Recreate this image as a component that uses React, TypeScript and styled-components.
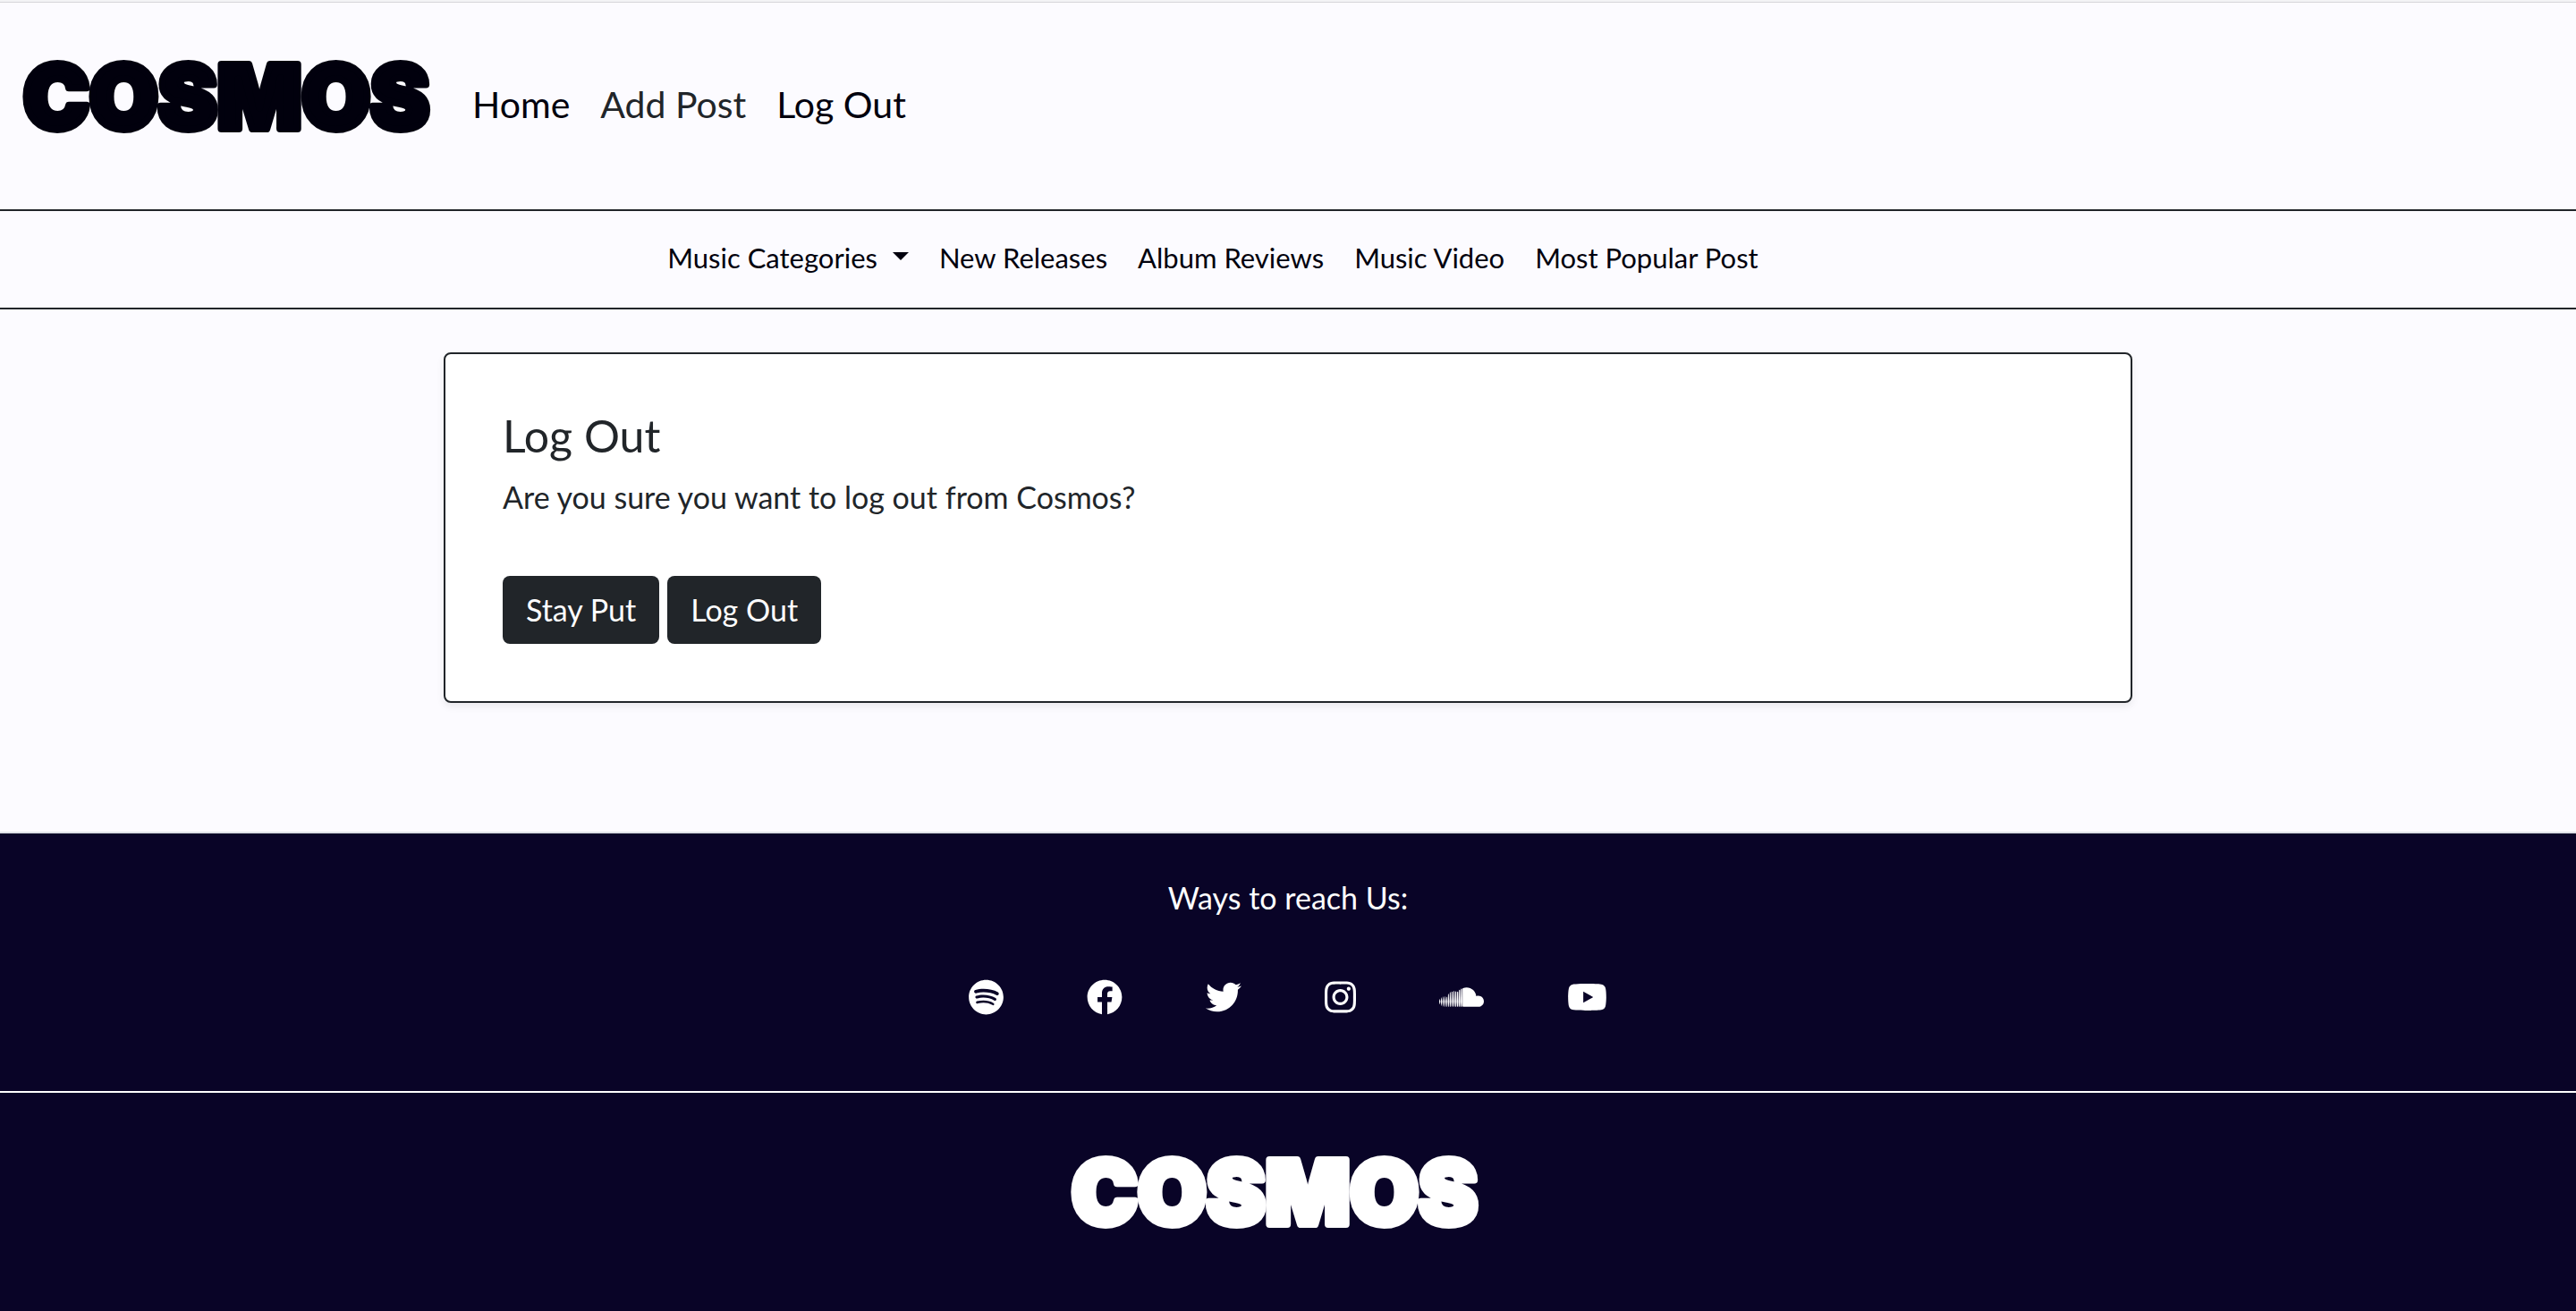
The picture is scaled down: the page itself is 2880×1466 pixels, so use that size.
import React from "react";
import styled, { createGlobalStyle } from "styled-components";
import {
  FaSpotify,
  FaFacebook,
  FaTwitter,
  FaInstagram,
  FaSoundcloud,
  FaYoutube,
} from "react-icons/fa";

const color = {
  page: "#fcfbff",
  ink: "#01000d",
  dark: "#212529",
  night: "#090427",
  white: "#ffffff",
};

const GlobalStyle = createGlobalStyle`
  *, *::before, *::after { box-sizing: border-box; }
  body {
    margin: 0;
    background: ${color.page};
    color: ${color.dark};
    font-family: Lato, "Liberation Sans", sans-serif;
    font-size: 34px;
    line-height: 48px;
  }
`;

const Page = styled.div`
  display: flex;
  flex-direction: column;
  min-height: 100vh;
  border-top: 2px solid #f3f3f5;
`;

const Header = styled.header`
  display: flex;
  align-items: center;
  gap: 16px;
  height: 234px;
  padding: 0 24px;
  border-top: 1px solid #d6d6da;
  border-bottom: 2px solid ${color.dark};
`;

const MainNav = styled.nav`
  padding-bottom: 4px;
`;

const Brand = styled.a<{ $light?: boolean }>`
  display: block;
  margin: 0 28px 20px 0;
  color: ${(p) => (p.$light ? color.white : color.ink)};
`;

const Wordmark = styled.svg`
  display: block;
  width: 460px;
  height: 84px;
  overflow: visible;
  fill: currentColor;
  stroke: currentColor;
  stroke-width: 8px;
  stroke-linejoin: round;
  font: 900 99px Inter, "Liberation Sans", sans-serif;
`;

const NavList = styled.ul<{ $sub?: boolean }>`
  display: flex;
  align-items: center;
  gap: 34px;
  margin: 0;
  padding: 0;
  list-style: none;
  font-size: ${(p) => (p.$sub ? 31 : 41)}px;
`;

const NavLink = styled.a<{ $muted?: boolean }>`
  color: ${(p) => (p.$muted ? color.dark : color.ink)};
  text-decoration: none;
`;

const Toggle = styled.button`
  display: flex;
  align-items: center;
  gap: 17px;
  padding: 0;
  border: 0;
  background: none;
  color: ${color.ink};
  font: inherit;
  line-height: 48px;
  cursor: pointer;

  &::after {
    content: "";
    margin-bottom: 4px;
    border-top: 9px solid currentColor;
    border-right: 9px solid transparent;
    border-left: 9px solid transparent;
  }
`;

const SubNav = styled.nav`
  display: flex;
  justify-content: center;
  padding: 28px 168px 32px 0;
  border-bottom: 2px solid ${color.dark};
`;

const Main = styled.main`
  width: 66.6667%;
  margin: 48px auto 144px;
  padding: 0 16px;
`;

const Card = styled.section`
  padding: 62px 64px 64px;
  border: 2px solid ${color.dark};
  border-radius: 8px;
  background: ${color.white};
  box-shadow: 0 4px 8px rgba(0, 0, 0, 0.08);
`;

const Title = styled.h1`
  margin: 0 0 16px;
  font-size: 50px;
  font-weight: 400;
  line-height: 58px;
`;

const Question = styled.p`
  margin: 0;
`;

const Actions = styled.form`
  display: flex;
  gap: 9px;
  margin-top: 64px;
`;

const Button = styled.button`
  padding: 14px 26px;
  border: 0;
  border-radius: 8px;
  background: ${color.dark};
  color: ${color.white};
  font: inherit;
  cursor: pointer;
`;

const Footer = styled.footer`
  display: flex;
  flex: 1;
  flex-direction: column;
  border-top: 2px solid #dee2e6;
  background: ${color.night};
  color: ${color.white};
`;

const Contact = styled.section`
  display: flex;
  flex-direction: column;
  align-items: center;
  gap: 67px;
  padding: 48px 0 85px;
  border-bottom: 2px solid ${color.white};
`;

const Reach = styled.p`
  margin: 0;
`;

const Socials = styled.ul`
  display: flex;
  gap: 93px;
  margin: 0;
  padding: 0;
  list-style: none;
`;

const SocialLink = styled.a<{ $width: number }>`
  display: block;
  color: ${color.white};

  svg {
    display: block;
    width: ${(p) => p.$width}px;
    height: 40px;
  }
`;

const FooterBrand = styled.div`
  display: flex;
  justify-content: center;
  padding-top: 70px;
`;

const links = ["New Releases", "Album Reviews", "Music Video", "Most Popular Post"];

const socials = [
  { name: "Spotify", Icon: FaSpotify, width: 39 },
  { name: "Facebook", Icon: FaFacebook, width: 40 },
  { name: "Twitter", Icon: FaTwitter, width: 40 },
  { name: "Instagram", Icon: FaInstagram, width: 35 },
  { name: "SoundCloud", Icon: FaSoundcloud, width: 50 },
  { name: "YouTube", Icon: FaYoutube, width: 45 },
];

function Logo({ light }: { light?: boolean }) {
  return (
    <Brand href="#" $light={light}>
      <Wordmark viewBox="0 0 460 84">
        <text x="2" y="77">COSMOS</text>
      </Wordmark>
    </Brand>
  );
}

export default function App() {
  return (
    <Page>
      <GlobalStyle />
      <Header>
        <Logo />
        <MainNav>
          <NavList>
            <li><NavLink href="#">Home</NavLink></li>
            <li><NavLink href="#" $muted>Add Post</NavLink></li>
            <li><NavLink href="#">Log Out</NavLink></li>
          </NavList>
        </MainNav>
      </Header>
      <SubNav>
        <NavList $sub>
          <li><Toggle type="button">Music Categories</Toggle></li>
          {links.map((label) => (
            <li key={label}><NavLink href="#">{label}</NavLink></li>
          ))}
        </NavList>
      </SubNav>
      <Main>
        <Card>
          <Title>Log Out</Title>
          <Question>Are you sure you want to log out from Cosmos?</Question>
          <Actions>
            <Button type="button">Stay Put</Button>
            <Button type="submit">Log Out</Button>
          </Actions>
        </Card>
      </Main>
      <Footer>
        <Contact>
          <Reach>Ways to reach Us:</Reach>
          <Socials>
            {socials.map(({ name, Icon, width }) => (
              <li key={name}>
                <SocialLink href="#" aria-label={name} $width={width}><Icon /></SocialLink>
              </li>
            ))}
          </Socials>
        </Contact>
        <FooterBrand>
          <Logo light />
        </FooterBrand>
      </Footer>
    </Page>
  );
}
